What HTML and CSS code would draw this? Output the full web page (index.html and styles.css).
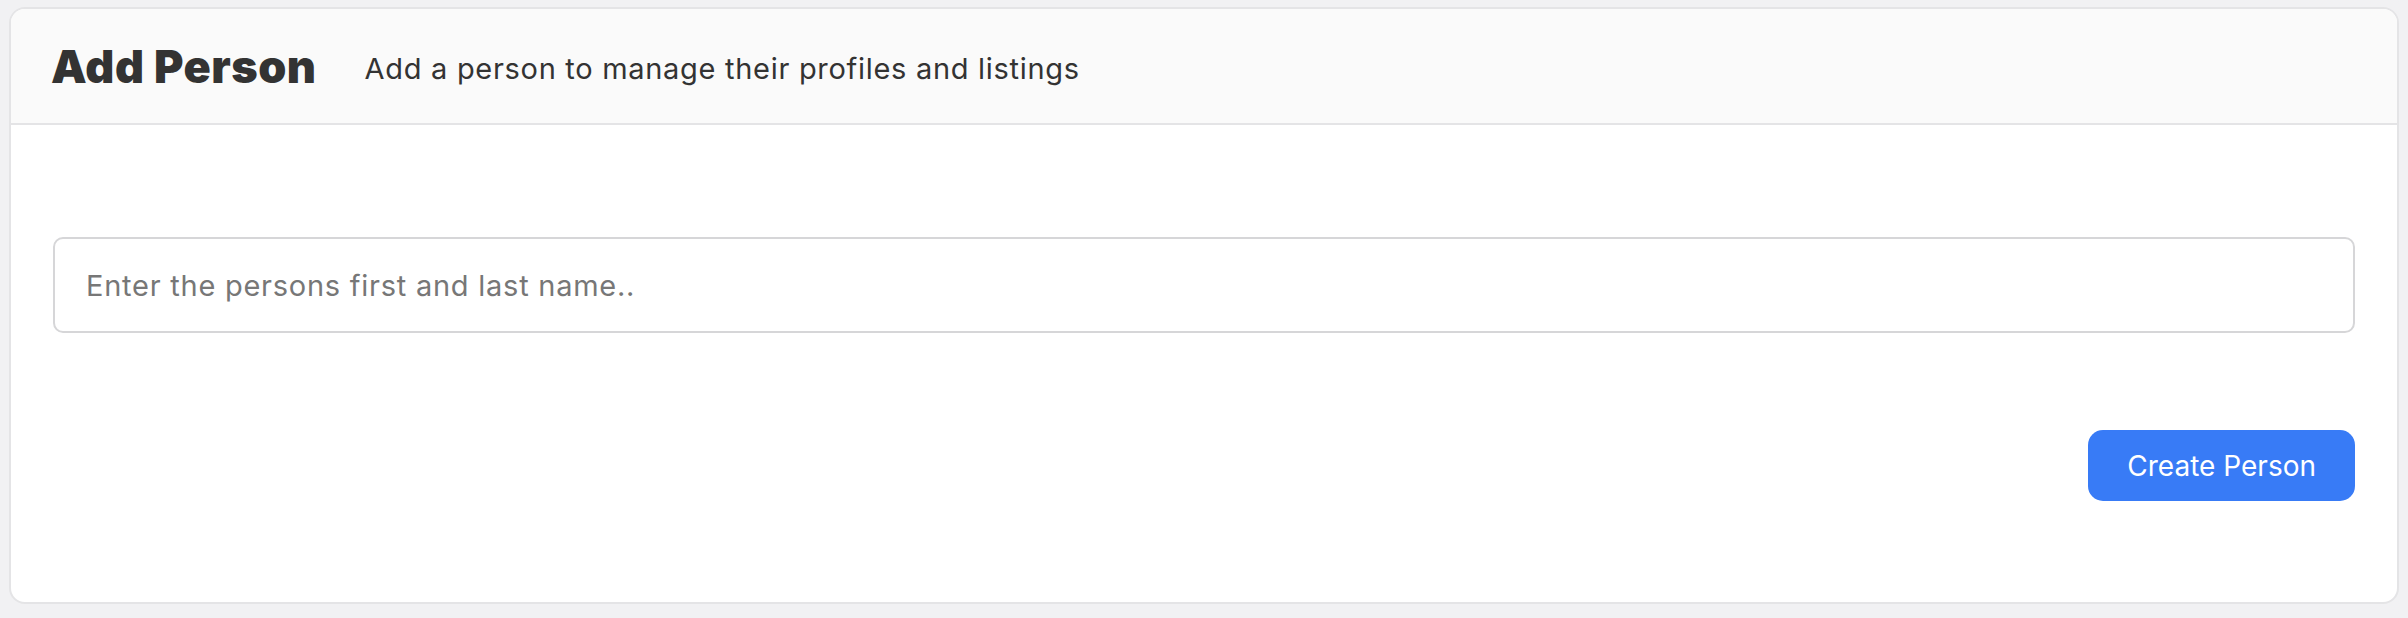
FILE: index.html
```html
<!DOCTYPE html>
<html lang="en">
<head>
    <meta charset="UTF-8">
    <meta name="viewport" content="width=device-width, initial-scale=1.0">
    <title>Add Person</title>
    <link rel="stylesheet" href="styles.css">
</head>
<body>
    <div class="card">
        <div class="card-header">
            <h1>Add Person</h1>
            <p>Add a person to manage their profiles and listings</p>
        </div>
        <div class="card-body">
            <input type="text" id="personName" placeholder="Enter the persons first and last name..">
            <div class="actions">
                <button>Create Person</button>
            </div>
        </div>
    </div>
</body>
</html>
```

FILE: styles.css
```css
body {
    margin: 0;
    padding: 7px 9px 14px 9px;
    background: #f1f1f3;
    font-family: Inter, "Noto Sans", sans-serif;
    color: #333;
}
.card {
    background: white;
    border: 2px solid #e4e4e6;
    border-radius: 16px;
    overflow: hidden;
}
.card-header {
    display: flex;
    align-items: center;
    height: 114px;
    padding: 0 40px;
    background: #fafafa;
    border-bottom: 2px solid #e4e4e6;
}
.card-header h1 {
    margin: 0 48px 0 0;
    font-size: 45px;
    font-weight: 900;
    letter-spacing: 0.5px;
    color: #333;
}
.card-header p {
    margin: 4px 0 0 0;
    font-size: 29px;
    letter-spacing: 0.7px;
    color: #333;
}
.card-body {
    padding: 112px 42px 101px 42px;
}
input {
    box-sizing: border-box;
    width: 100%;
    height: 96px;
    padding: 0 31px;
    border: 2px solid #d6d6d8;
    border-radius: 10px;
    font-family: Inter, "Noto Sans", sans-serif;
    font-size: 29px;
    letter-spacing: 0.75px;
    color: #333;
    outline: none;
}
input::placeholder {
    color: #777;
}
.actions {
    display: flex;
    justify-content: flex-end;
    margin-top: 97px;
}
button {
    height: 71px;
    padding: 0 39px;
    background: #387bf6;
    color: white;
    border: none;
    border-radius: 15px;
    font-family: Inter, "Noto Sans", sans-serif;
    font-size: 28px;
    cursor: pointer;
}
button:hover {
    background: #2f6de0;
}
```
